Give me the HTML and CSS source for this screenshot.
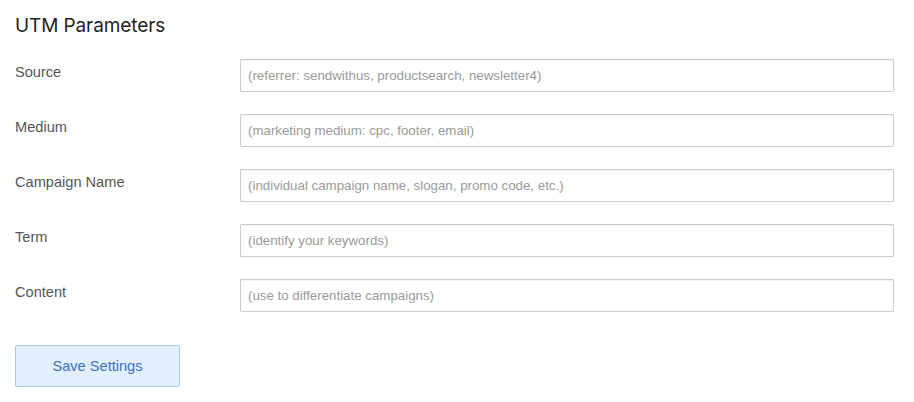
FILE: index.html
```html
<!DOCTYPE html>
<html>
<head>
<meta charset="utf-8">
<link rel="stylesheet" href="styles.css">
</head>
<body>
<div class="panel">
  <h2 class="title">UTM Parameters</h2>
  <div class="rows">
    <div class="row">
      <label class="label">Source</label>
      <input class="field" type="text" placeholder="(referrer: sendwithus, productsearch, newsletter4)">
    </div>
    <div class="row">
      <label class="label">Medium</label>
      <input class="field" type="text" placeholder="(marketing medium: cpc, footer, email)">
    </div>
    <div class="row">
      <label class="label">Campaign Name</label>
      <input class="field" type="text" placeholder="(individual campaign name, slogan, promo code, etc.)">
    </div>
    <div class="row">
      <label class="label">Term</label>
      <input class="field" type="text" placeholder="(identify your keywords)">
    </div>
    <div class="row">
      <label class="label">Content</label>
      <input class="field" type="text" placeholder="(use to differentiate campaigns)">
    </div>
  </div>
  <button class="save" type="button">Save Settings</button>
</div>
</body>
</html>
```
FILE: styles.css
```css
html, body {
  margin: 0;
  padding: 0;
  background: #ffffff;
}
.panel {
  padding: 14px 20px 0 15px;
  font-family: "Liberation Sans", Arial, sans-serif;
}
.title {
  margin: 0;
  font-family: Inter, "Liberation Sans", sans-serif;
  font-weight: 400;
  font-size: 19px;
  line-height: 24px;
  color: #1f1f1f;
  letter-spacing: -0.1px;
}
.rows {
  margin-top: 21px;
  display: flex;
  flex-direction: column;
  gap: 22px;
}
.row {
  display: grid;
  grid-template-columns: 225px 1fr;
  align-items: start;
}
.label {
  font-size: 14.6px;
  line-height: 17px;
  color: #555555;
  padding-top: 5px;
}
.field {
  box-sizing: border-box;
  height: 33px;
  width: 100%;
  margin: 0;
  border: 1px solid #cccccc;
  border-radius: 1px;
  box-shadow: inset 0 1px 1px rgba(0,0,0,0.06);
  padding: 0 7px;
  font-family: "Liberation Sans", Arial, sans-serif;
  font-size: 13.3px;
  color: #333;
  background: #fff;
  outline: none;
}
.field::placeholder {
  color: #9a9a9a;
}
.save {
  margin-top: 33px;
  box-sizing: border-box;
  width: 165px;
  height: 42px;
  background: #e2effd;
  border: 1px solid #a9c9ea;
  border-radius: 2px;
  color: #3a72c2;
  font-family: "Liberation Sans", Arial, sans-serif;
  font-size: 14.6px;
  padding: 0;
}
```
